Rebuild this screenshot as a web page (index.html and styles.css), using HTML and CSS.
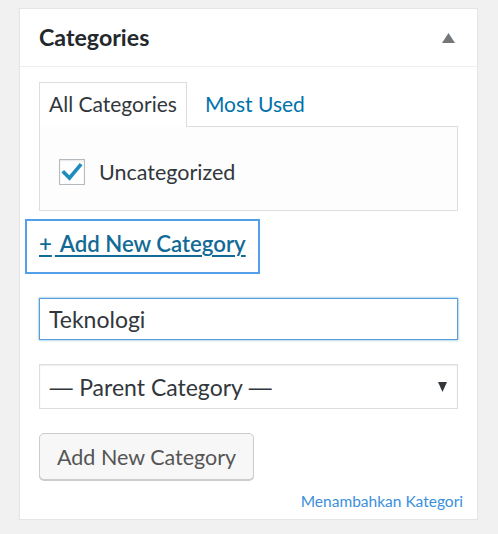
FILE: index.html
```html
<!DOCTYPE html>
<html lang="id">
<head>
<meta charset="utf-8">
<title>Categories</title>
<link rel="stylesheet" href="styles.css">
</head>
<body>
<div class="postbox">
  <div class="postbox-header">
    <h2 class="postbox-title">Categories</h2>
    <svg class="toggle" width="13" height="10" viewBox="0 0 13 10" aria-hidden="true"><polygon points="6.5,0 13,10 0,10" fill="#72777c"/></svg>
  </div>
  <div class="inside">
    <ul class="tabs">
      <li class="tab active">All Categories</li>
      <li class="tab"><a href="#">Most Used</a></li>
    </ul>
    <div class="panel">
      <label class="cat">
        <span class="checkbox"><svg width="22" height="20" viewBox="0 0 22 20" aria-hidden="true"><polyline points="3,10.5 8.5,16 19,3.5" fill="none" stroke="#1e8cbe" stroke-width="3.6" stroke-linecap="square" stroke-linejoin="miter"/></svg></span>
        <span>Uncategorized</span>
      </label>
    </div>
    <h4 class="adder-toggle"><a href="#"><span class="plus">+</span> Add New Category</a></h4>
    <input class="new-cat" type="text" value="Teknologi">
    <div class="select">
      <span class="select-label"><span class="dash">—</span> Parent Category <span class="dash">—</span></span>
      <svg class="caret" width="9" height="10" viewBox="0 0 9 10" aria-hidden="true"><polygon points="0,0 9,0 4.5,10" fill="#32373c"/></svg>
    </div>
    <button class="button" type="button">Add New Category</button>
    <div class="note">Menambahkan Kategori</div>
  </div>
</div>
</body>
</html>
```
FILE: styles.css
```css
body {
  margin: 0;
  background: #f1f1f1;
  font-family: Lato, "Open Sans", sans-serif;
  color: #32373c;
}

.postbox {
  margin: 8px 0 0 19px;
  width: 459px;
  box-sizing: border-box;
  background: #fff;
  border: 1px solid #e5e5e5;
  box-shadow: 0 1px 1px rgba(0, 0, 0, 0.04);
}

.postbox-header {
  display: flex;
  align-items: center;
  justify-content: space-between;
  height: 57px;
  padding: 0 22px 0 19px;
  border-bottom: 1px solid #eee;
}

.postbox-title {
  margin: 0;
  font-size: 23.2px;
  font-weight: 700;
  line-height: 57px;
  color: #23282d;
}

.inside {
  padding: 0 19px 8px 19px;
}

.tabs {
  display: flex;
  gap: 8px;
  margin: 15px 0 -1px;
  padding: 0;
  list-style: none;
  font-size: 21px;
}

.tab {
  padding: 0 9px 3px;
  line-height: 41px;
  border: 1px solid transparent;
  border-bottom: 0;
}

.tab.active {
  position: relative;
  z-index: 1;
  border-color: #ddd;
  background: #fff;
  color: #32373c;
}

.tab a {
  color: #0073aa;
  text-decoration: none;
}

.panel {
  border: 1px solid #ddd;
  background: #fdfdfd;
  padding: 32px 19px 25px;
}

.cat {
  display: flex;
  align-items: center;
  height: 26px;
  line-height: 26px;
  font-size: 21.5px;
  color: #32373c;
}

.checkbox {
  display: flex;
  align-items: center;
  justify-content: center;
  width: 26px;
  height: 26px;
  box-sizing: border-box;
  margin-right: 14px;
  border: 1px solid #b4b9be;
  background: #fff;
  box-shadow: inset 0 1px 2px rgba(0, 0, 0, 0.1);
}

.adder-toggle {
  margin: 8px 0 0 -14px;
  width: 235px;
  height: 55px;
  box-sizing: border-box;
  border: 2px solid #52a1e8;
  padding: 8px 0 0 12px;
  font-size: 22.2px;
  font-weight: 600;
  line-height: 30px;
}

.adder-toggle a {
  color: #126a96;
  text-decoration: underline;
  text-decoration-thickness: 2px;
  text-underline-offset: 3px;
}

.plus {
  margin-right: 3px;
}

.new-cat {
  display: block;
  margin: 24px 0 0;
  width: 100%;
  height: 42px;
  box-sizing: border-box;
  padding: 0 9px;
  border: 1px solid #5b9dd9;
  box-shadow: 0 0 2px rgba(30, 140, 190, 0.8);
  outline: none;
  font-family: Lato, "Open Sans", sans-serif;
  font-size: 23px;
  color: #32373c;
  background: #fff;
}

.select {
  display: flex;
  align-items: center;
  justify-content: space-between;
  margin-top: 24px;
  height: 45px;
  box-sizing: border-box;
  padding: 0 10px 0 9px;
  border: 1px solid #ddd;
  box-shadow: inset 0 1px 2px rgba(0, 0, 0, 0.07);
  font-size: 23px;
  color: #32373c;
}

.dash {
  display: inline-block;
  margin: 0 3px;
  transform: scaleX(1.5);
}

.button {
  display: block;
  margin-top: 24px;
  height: 47px;
  padding: 0 17px;
  border: 1px solid #ccc;
  border-radius: 5px;
  background: #f7f7f7;
  box-shadow: 0 1px 0 #ccc;
  font-family: Lato, "Open Sans", sans-serif;
  font-size: 21.5px;
  color: #555;
}

.note {
  margin: 11px -5px 0 0;
  text-align: right;
  font-size: 15.5px;
  line-height: 20px;
  color: #3b8fdb;
}
```
